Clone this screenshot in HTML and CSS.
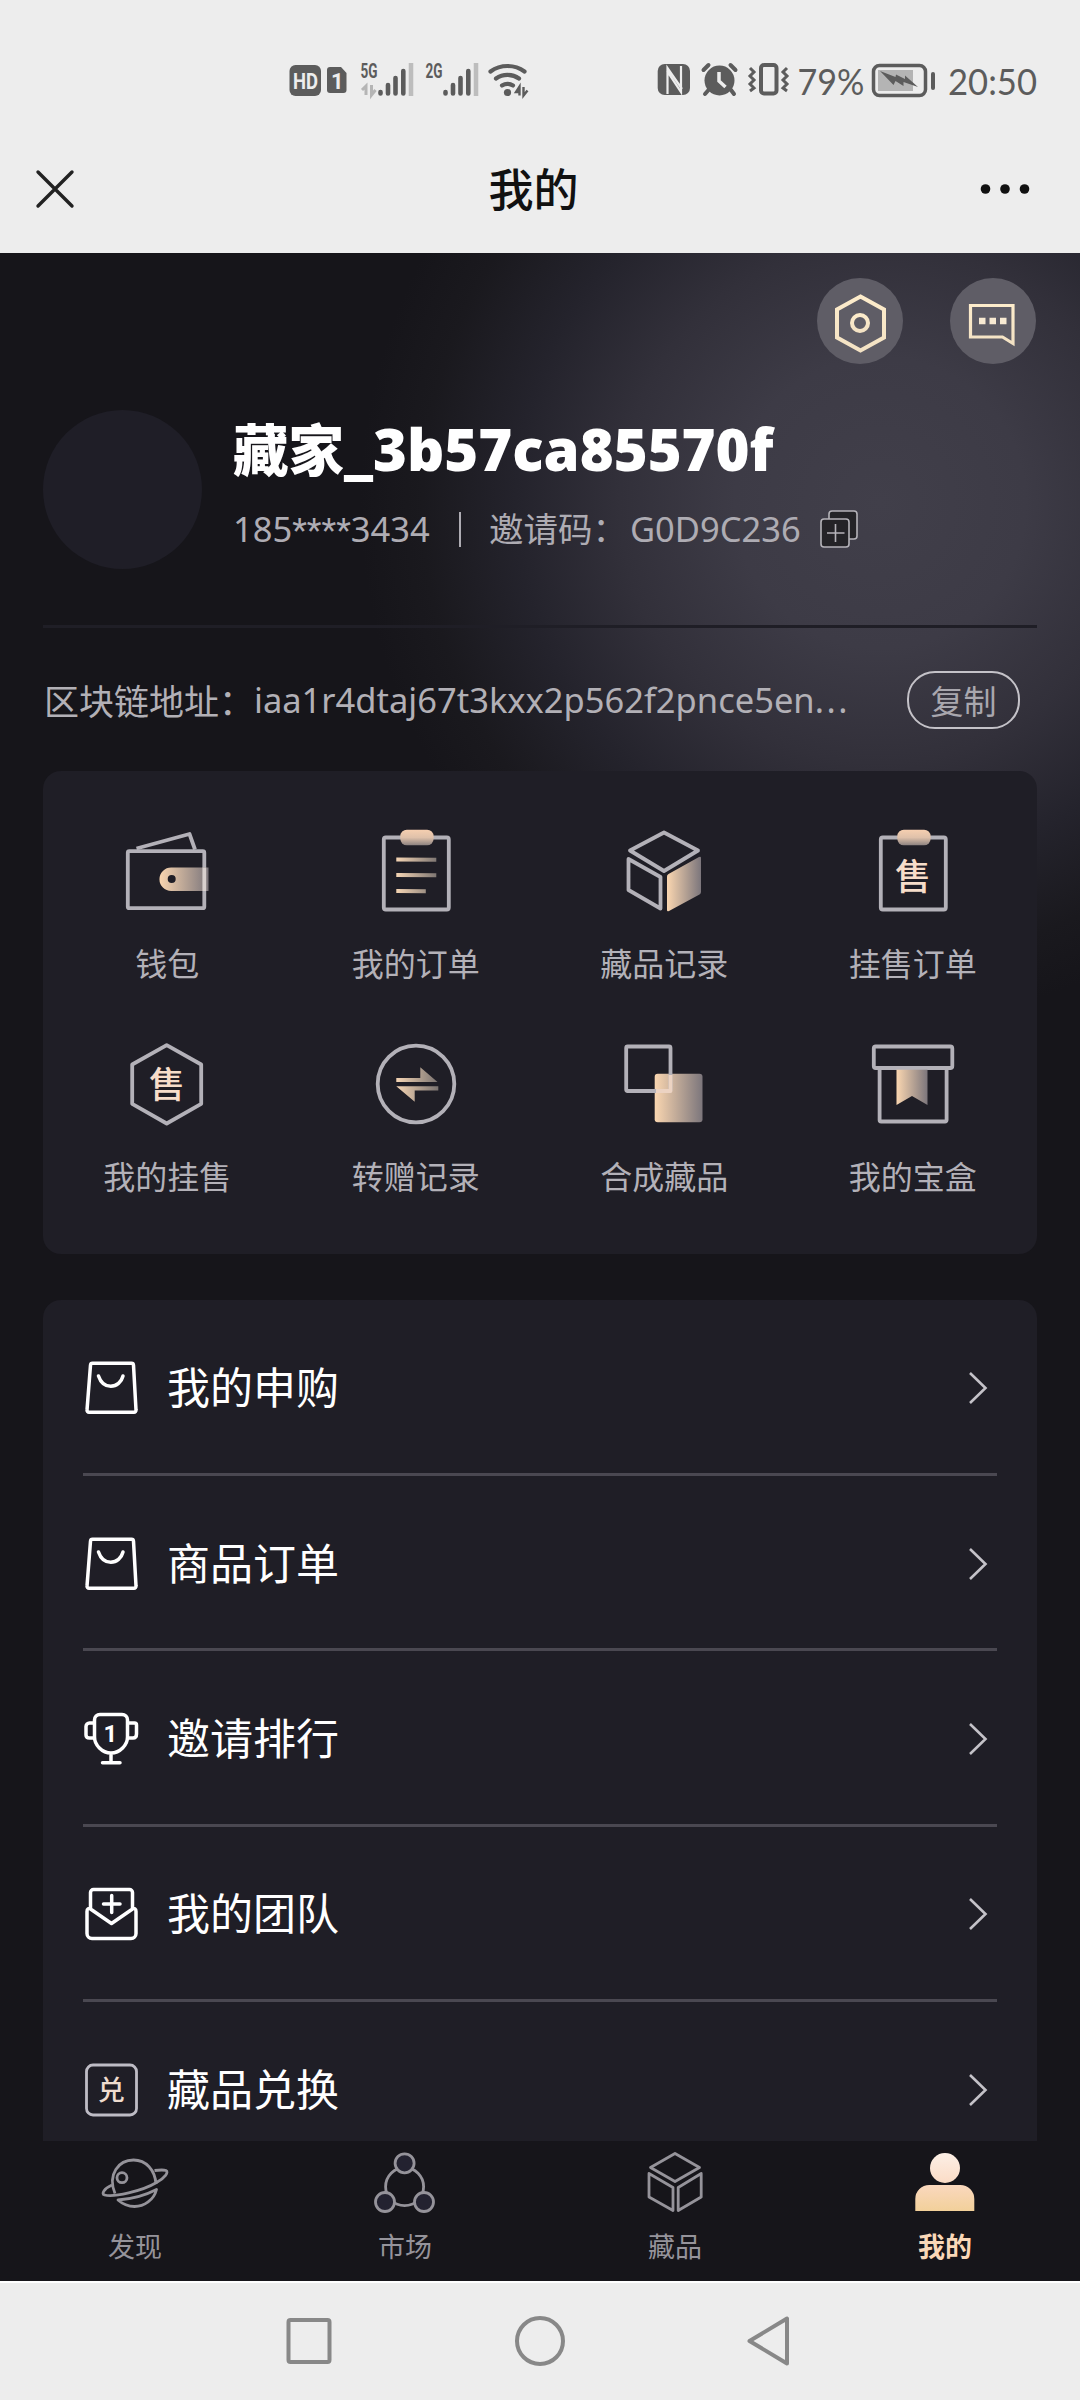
FILE: index.html
```html
<!DOCTYPE html>
<html lang="zh-CN">
<head>
<meta charset="utf-8">
<title>我的</title>
<link rel="stylesheet" href="styles.css">
</head>
<body>
<svg class="defs" width="0" height="0">
  <defs>
    <linearGradient id="goldH"><stop offset="0" stop-color="#fad6b0"/><stop offset="1" stop-color="#7c767c"/></linearGradient>
    <linearGradient id="goldLine" gradientUnits="userSpaceOnUse" x1="24" y1="0" x2="68" y2="0"><stop offset="0" stop-color="#f9d8b6"/><stop offset="1" stop-color="#77716f"/></linearGradient>
    <linearGradient id="goldV" x2="0" y2="1"><stop offset="0" stop-color="#f6cfb0"/><stop offset=".5" stop-color="#dfc1aa"/><stop offset="1" stop-color="#8c8280"/></linearGradient>
    <linearGradient id="head" x2="0" y2="1"><stop offset="0" stop-color="#fcefe6"/><stop offset="1" stop-color="#fbdcc6"/></linearGradient>
    <linearGradient id="torso" x2="0" y2="1"><stop offset="0" stop-color="#fad8be"/><stop offset="1" stop-color="#f2d09a"/></linearGradient>
    <linearGradient id="cream" x2="0" y2="1"><stop offset="0" stop-color="#fdeccb"/><stop offset="1" stop-color="#f3e2c4"/></linearGradient>
  </defs>
</svg>
<div class="phone">
  <header class="statusbar">
    <svg class="status-left" width="250" height="50" viewBox="280 50 250 50">
      <rect x="289.500" y="65" width="31.500" height="31" rx="6" fill="#5c5c5c"/>
      <text class="st-hd" x="293" y="89" textLength="25" lengthAdjust="spacingAndGlyphs">HD</text>
      <path d="M330 67h11l5.500 6v17a3 3 0 0 1-3 3h-13.500a3 3 0 0 1-3-3v-20a3 3 0 0 1 3-3z" fill="#5c5c5c"/>
      <text class="st-one" x="331" y="88.500">1</text>
      <text class="st-net" x="360.500" y="77.500" textLength="17" lengthAdjust="spacingAndGlyphs">5G</text>
      <text class="st-net" x="425.500" y="77.500" textLength="17" lengthAdjust="spacingAndGlyphs">2G</text>
      <g fill="none" stroke="#b5b5b5" stroke-width="3"><path d="M366 95V86l-4 4M371.500 85v10l4-5"/></g>
      <g stroke="#5c5c5c" stroke-width="4.600" stroke-linecap="round">
        <path d="M380.500 92v1.500M388 85v8.500M395.500 78v15.500M403.300 71v22.500M445.500 92v1.500M453 85v8.500M460.500 78v15.500M468.300 71v22.500"/>
      </g>
      <path d="M411 63v33M476 63v33" stroke="#bdbdbd" stroke-width="4.500"/>
      <g fill="none" stroke="#5c5c5c" stroke-width="4.200" stroke-linecap="round"><path d="M490.500 71.500a29 29 0 0 1 34 0M496 78.500a20 20 0 0 1 23 0M502 85.500a10.500 10.500 0 0 1 11 0"/></g>
      <circle cx="507.500" cy="92.500" r="3.600" fill="#5c5c5c"/>
      <path d="M519.500 95.500v-9l-3.500 5.500h4M523.500 87v8.500l4-5" fill="none" stroke="#5c5c5c" stroke-width="2.400"/>
    </svg>
    <svg class="status-right" width="390" height="60" viewBox="650 50 390 60">
      <rect x="657.700" y="64" width="32.300" height="31" rx="7" fill="#5c5c5c"/>
      <path d="M667.500 94V68l14.500 21M681 66v26L667 71" fill="none" stroke="#ededed" stroke-width="2.200"/>
      <circle cx="719.500" cy="80.500" r="15" fill="#5c5c5c"/>
      <path d="M703.500 70l5-5M730.500 65l5 5M708.500 90l-3.500 4M731 90l3 4" stroke="#5c5c5c" stroke-width="4" stroke-linecap="round"/>
      <path d="M719 72v9l6.500 6" fill="none" stroke="#ededed" stroke-width="3.500"/>
      <rect x="761" y="65" width="15.500" height="28.500" rx="3" fill="none" stroke="#5c5c5c" stroke-width="4"/>
      <path d="M750 68l4 4-4 4 4 4-4 4 4 4-4 3M787 68l-4 4 4 4-4 4 4 4-4 4 4 3" fill="none" stroke="#5c5c5c" stroke-width="3"/>
      <text class="st-text" x="797.500" y="94.500" textLength="67" lengthAdjust="spacingAndGlyphs">79%</text>
      <rect x="873.500" y="65.500" width="52" height="30" rx="6" fill="none" stroke="#5c5c5c" stroke-width="3.500"/>
      <rect x="878" y="70" width="35" height="21" fill="#b4b4b4"/>
      <path d="M880 71l15.500 6 .5-2.500 9 4.500v-3.500l13 11.500-14.500-5v4l-8-5-2 4z" fill="#5c5c5c"/>
      <path d="M933 74v14" stroke="#5c5c5c" stroke-width="4" stroke-linecap="round"/>
      <text class="st-text" x="948" y="94.500" textLength="89" lengthAdjust="spacingAndGlyphs">20:50</text>
    </svg>
  </header>
  <nav class="titlebar">
    <svg width="42" height="42" viewBox="0 0 42 42"><path d="M4 4l34 34M38 4L4 38" stroke="#222" stroke-width="3.400" stroke-linecap="round"/></svg>
    <h1>我的</h1>
    <svg width="50" height="12" viewBox="0 0 50 12" fill="#111"><circle cx="5.500" cy="6" r="4.800"/><circle cx="25" cy="6" r="4.800"/><circle cx="44.500" cy="6" r="4.800"/></svg>
  </nav>

  <main class="screen">
    <div class="tools">
      <div class="round"><svg width="86" height="86" viewBox="0 0 86 86" fill="none" stroke="url(#cream)" stroke-width="4"><path d="M43.500 18.500l23.500 13v28l-23.500 13-23.500-13v-28z"/><circle cx="43" cy="45" r="8"/></svg></div>
      <div class="round"><svg width="86" height="86" viewBox="0 0 86 86" fill="none" stroke="url(#cream)" stroke-width="3.200"><path d="M20.500 27.500H63v38l-10.500-6.500H20.500z"/><path d="M29 43h6.500M39.500 43H46M50 43h6.500" stroke="#f8ead2" stroke-width="6.500"/></svg></div>
    </div>
    <section class="profile">
      <div class="avatar"></div>
      <div class="who">
        <h2 class="name">藏家<span class="name-id">_3b57ca85570f</span></h2>
        <div class="meta">
          <span class="phone-no">185<span class="stars">****</span>3434</span><i class="bar"></i><span class="invite">邀请码：</span><span class="code">G0D9C236</span>
          <svg width="40" height="40" viewBox="0 0 40 40" fill="#242327" stroke="#b5b3b9" stroke-width="1.600"><rect x="10" y="2" width="28" height="28" rx="3"/><rect x="2" y="10" width="28" height="28" rx="3"/><path d="M8 24h17.500M16.500 15v18"/></svg>
        </div>
      </div>
    </section>
    <section class="chain">
      <span class="chain-label">区块链地址：</span><span class="addr">iaa1r4dtaj67t3kxx2p562f2pnce5en<span class="dots">...</span></span>
      <button class="copy">复制</button>
    </section>

    <section class="grid">
      <div class="cell"><svg viewBox="0 0 90 90"><path d="M14.500 22.500L67.500 8l5.500 15.500"/><rect x="5.800" y="25.200" width="76.500" height="57" rx="1.500"/><path d="M86.500 41.500H49.200a11.700 11.700 0 0 0 0 23.500h37.300zM49.700 49a4 4 0 1 1 0 8 4 4 0 0 1 0-8z" fill="url(#goldH)" stroke="none"/><path d="M82.300 41.500V65" stroke="#d8d0ce"/></svg><span>钱包</span></div>
      <div class="cell"><svg viewBox="0 0 90 90"><rect x="12.800" y="11.500" width="65" height="72" rx="2"/><rect x="29.300" y="3.700" width="33.300" height="15.600" rx="6.500" fill="url(#goldV)" stroke="none"/><g stroke="url(#goldLine)" stroke-width="4"><path d="M25.300 33.500l40 .2M25.300 49l40 .2M25.300 65l29.500.2"/></g></svg><span>我的订单</span></div>
      <div class="cell"><svg viewBox="0 0 90 90"><path d="M45 6.500l34 18-34 20.500-34-20.500zM9.500 33l32 18v31.500l-32-18.500z"/><path d="M48 51a3 3 0 0 1 1.500-3L80 31q2-1 2 1v34a3 3 0 0 1-1.500 2.500L50 85q-2 1-2-1z" fill="url(#goldH)" stroke="none"/></svg><span>藏品记录</span></div>
      <div class="cell"><svg viewBox="0 0 90 90"><rect x="12.800" y="11.500" width="65" height="72" rx="2"/><rect x="29.300" y="3.700" width="33.300" height="15.600" rx="6.500" fill="url(#goldV)" stroke="none"/><text class="glyph" x="45" y="64">售</text></svg><span>挂售订单</span></div>
      <div class="cell"><svg viewBox="0 0 90 90"><path d="M44.700 6.200l34.500 19.300v39.300L44.700 84.500 10.200 64.800V25.500z"/><text class="glyph" x="45" y="58.500">售</text></svg><span>我的挂售</span></div>
      <div class="cell"><svg viewBox="0 0 90 90"><circle cx="45" cy="45" r="38.300"/><path d="M25.300 39h24V28.300L66.500 43H25.300zM67.300 51.500H43.700V62.700L25.300 47.300h42z" fill="url(#goldLine)" stroke="none"/></svg><span>转赠记录</span></div>
      <div class="cell"><svg viewBox="0 0 90 90"><rect x="35.700" y="34.700" width="47.800" height="48.600" rx="3" fill="url(#goldH)" stroke="none"/><rect x="7.200" y="7.500" width="44.300" height="44.500" rx="1.500"/><path d="M51.500 36v16H37" stroke="#ecd3c2"/></svg><span>合成藏品</span></div>
      <div class="cell"><svg viewBox="0 0 90 90"><rect x="5.800" y="7.500" width="78.500" height="21.500" rx="2"/><path d="M11.600 29v52a1.500 1.500 0 0 0 1.500 1.500h64a1.500 1.500 0 0 0 1.500-1.500V29"/><path d="M28.500 30.800h31V66L44 57 28.500 66z" fill="url(#goldH)" stroke="none"/></svg><span>我的宝盒</span></div>
    </section>

    <section class="list">
      <div class="row"><svg class="ico" viewBox="0 0 56 56"><path d="M9.500 3.300h39a2 2 0 0 1 2 1.800L53 50a2 2 0 0 1-2 2.200H6A2 2 0 0 1 4 50L7.500 5.100a2 2 0 0 1 2-1.800z"/><path d="M15.500 16c2 6 6.500 10.300 12.300 10.300S38.500 22 40 16"/></svg><span>我的申购</span><svg class="chev" viewBox="0 0 20 34"><path d="M2 2l15.500 15L2 32"/></svg></div>
      <div class="row"><svg class="ico" viewBox="0 0 56 56"><path d="M9.500 3.300h39a2 2 0 0 1 2 1.800L53 50a2 2 0 0 1-2 2.200H6A2 2 0 0 1 4 50L7.500 5.100a2 2 0 0 1 2-1.800z"/><path d="M15.500 16c2 6 6.500 10.300 12.300 10.300S38.500 22 40 16"/></svg><span>商品订单</span><svg class="chev" viewBox="0 0 20 34"><path d="M2 2l15.500 15L2 32"/></svg></div>
      <div class="row"><svg class="ico" viewBox="0 0 56 56"><path d="M17 3.500h22a5.500 5.500 0 0 1 5.500 5.500v17c0 8-7.500 16-16.500 16S11.500 34 11.500 26V9A5.500 5.500 0 0 1 17 3.500zM11.500 12H6.500a3.500 3.500 0 0 0-3.500 3.500v8.500q0 3 3.500 3h5M44.500 12h7a2 2 0 0 1 2 2v9q0 4-3.500 4h-5.500M28 42v9.500M19.500 51.700h17.500"/><text class="rank" x="27.500" y="31">1</text></svg><span>邀请排行</span><svg class="chev" viewBox="0 0 20 34"><path d="M2 2l15.500 15L2 32"/></svg></div>
      <div class="row"><svg class="ico" viewBox="0 0 56 56"><path d="M7.500 23V6.500a3 3 0 0 1 3-3h36a3 3 0 0 1 3 3V23M7.500 23l21 14.500 21-14.500c2-1 3.500 0 3.500 2.500v22a5 5 0 0 1-5 5H9a5 5 0 0 1-5-5v-22c0-2.500 1.500-3.500 3.500-2.500zM20.500 18h16.500M28.700 9.500v17"/></svg><span>我的团队</span><svg class="chev" viewBox="0 0 20 34"><path d="M2 2l15.500 15L2 32"/></svg></div>
      <div class="row"><svg class="ico" viewBox="0 0 56 56"><rect x="3.500" y="3" width="50" height="50" rx="6.500" stroke="#bebcc5" stroke-width="2.800"/><text class="swap" x="28.300" y="38">兑</text></svg><span>藏品兑换</span><svg class="chev" viewBox="0 0 20 34"><path d="M2 2l15.500 15L2 32"/></svg></div>
    </section>
  </main>

  <nav class="tabs">
    <div class="tab"><svg viewBox="0 0 72 64"><path d="M16 43.500C8 24 20 10 34.500 10 47 10 56 20 57 34"/><path d="M13 35C5 38.500 2 44 5.500 45c9 2.500 38-4 52-12.500C66 28 70 22 67 20.500q-3-1-11.500 0"/><path d="M19 50c14-1 28-5 38.500-10.500C55 50 45 56.500 35.500 56.500q-9 0-16.500-6.500z"/><circle cx="23" cy="27.700" r="5"/></svg><span>发现</span></div>
    <div class="tab"><svg viewBox="0 0 72 64"><circle cx="35.600" cy="36.700" r="19"/><g fill="#232230"><circle cx="35.600" cy="13.300" r="9.500"/><circle cx="16" cy="52" r="9.500"/><circle cx="55" cy="52" r="9.500"/></g></svg><span>市场</span></div>
    <div class="tab"><svg viewBox="0 0 72 64"><path d="M36 3.500L60.500 17.500 36 31.500 11.500 17.500zM10 23.500l24 14v23l-24-13.500zM62.200 23.500l-23 14v23l23-13.500z"/></svg><span>藏品</span></div>
    <div class="tab active"><svg viewBox="0 0 72 64" stroke="none"><circle cx="36" cy="18" r="15" fill="url(#head)" stroke="none"/><path d="M6.300 61V49a14 14 0 0 1 14-14h31a14 14 0 0 1 14 14v12z" fill="url(#torso)" stroke="none"/></svg><span>我的</span></div>
  </nav>
  <footer class="sysnav">
    <svg viewBox="0 0 54 54"><rect x="6.500" y="6" width="41" height="42" rx="2"/></svg>
    <svg viewBox="0 0 54 54"><circle cx="27" cy="27" r="23"/></svg>
    <svg viewBox="0 0 54 54"><path d="M43 4.500v45L5.500 27z" stroke-linejoin="round"/></svg>
  </footer>
</div>
</body>
</html>
```
FILE: styles.css
```css
* { box-sizing: border-box; margin: 0; padding: 0; }
body { background: #ededed; font-family: "Noto Sans", "Noto Sans CJK SC", sans-serif; }
.defs { display: block; position: absolute; }
.phone { width: 1080px; height: 2400px; display: flex; flex-direction: column; overflow: hidden; }

.statusbar { height: 125px; padding: 50px 40px 0 280px; display: flex; justify-content: space-between; align-items: flex-start; flex: none; }
.st-hd, .st-one, .st-net { font-family: Roboto, sans-serif; font-weight: 700; }
.st-hd { font-size: 22px; fill: #ededed; }
.st-one { font-size: 22px; fill: #ededed; }
.st-net { font-size: 20px; fill: #5c5c5c; }
.st-text { font-family: Lato, sans-serif; font-size: 36px; fill: #5c5c5c; }

.titlebar { height: 128px; padding: 0 50px 0 34px; display: flex; align-items: center; flex: none; }
.titlebar h1 { flex: 1; margin: 0 0 2px 11px; text-align: center; font: 500 45px/64px "Noto Sans CJK SC", sans-serif; color: #111; }

.screen {
  height: 1888px; flex: none; overflow: hidden; padding: 25px 43px 0;
  background: radial-gradient(circle 520px at 880px 250px, #413f4a 0, #3d3b46 28%, #32303a 50%, #24232c 70%, #1a191e 88%, #16151a 100%) #16151a;
}
.tools { display: flex; justify-content: flex-end; gap: 47px; padding-right: 1px; }
.round { width: 86px; height: 86px; border-radius: 50%; background: #5f5d66; }
.round svg { display: block; }
.profile { display: flex; gap: 31px; height: 264px; padding-top: 46px; border-bottom: 3px solid #1f1e26; }
.avatar { width: 159px; height: 159px; border-radius: 50%; background: #1f1e27; flex: none; }
.who { display: flex; flex-direction: column; margin-top: -3px; }
.name { height: 80px; font: 900 55.500px/80px "Noto Sans CJK SC", sans-serif; color: #fff; white-space: nowrap; }
.name-id { font-family: "Open Sans", sans-serif; font-weight: 800; font-size: 58px; }
.meta { display: flex; align-items: center; height: 44px; margin-top: 20px; color: #aeacb3; font-size: 34.500px; line-height: 44px; white-space: nowrap; }
.phone-no { width: 198px; }
.stars { font-family: Roboto, sans-serif; font-size: 34px; }
.bar { width: 2px; height: 35px; background: #aeacb3; margin: 0 28px; }
.invite { width: 141px; }
.code { width: 168px; }
.meta svg { margin-left: 21px; flex: none; }
.chain { display: flex; align-items: center; height: 143px; padding: 0 17px 0 1px; color: #b2b0b6; font-size: 35px; white-space: nowrap; }
.chain-label { width: 210px; }
.addr { flex: 1; font-size: 34.500px; }
.dots { letter-spacing: 2.500px; }
.copy { width: 113px; height: 58px; border: 2px solid #c4c2c8; border-radius: 28px; background: none; color: #a9a7ae; font: 400 33px/50px "Noto Sans CJK SC", sans-serif; }

.grid { display: grid; grid-template-columns: repeat(4, 1fr); grid-auto-rows: 213px; height: 483px; padding: 55px 0 0; border-radius: 18px; background: #1f1e26; }
.cell { display: flex; flex-direction: column; align-items: center; }
.cell svg { width: 90px; height: 90px; fill: none; stroke: #b3b1b8; stroke-width: 3.800; stroke-linejoin: round; }
.cell span { margin-top: 22px; font: 400 32px/48px "Noto Sans CJK SC", sans-serif; color: #b3b1b8; }
.cell .glyph { font: 500 36px "Noto Sans CJK SC", sans-serif; fill: #f6ddca; stroke: none; text-anchor: middle; }

.list { margin-top: 46px; border-radius: 18px 18px 0 0; background: #1f1e26; padding: 0 40px; height: 900px; }
.row { display: flex; align-items: center; height: 175.400px; padding-top: 3px; border-bottom: 3px solid #4a4851; }
.row:first-child { height: 176px; }
.ico { width: 56px; height: 56px; fill: none; stroke: #fff; stroke-width: 3.500; stroke-linejoin: round; stroke-linecap: round; }
.row span { flex: 1; margin: 0 0 6px 28px; font: 400 43px/60px "Noto Sans CJK SC", sans-serif; color: #fff; }
.chev { width: 20px; height: 34px; margin-right: 9px; fill: none; stroke: #c4c2c8; stroke-width: 2.600; }
.rank { font: 700 24px Roboto, sans-serif; fill: #fff; stroke: none; text-anchor: middle; }
.swap { font: 500 27px "Noto Sans CJK SC", sans-serif; fill: #eedccf; stroke: none; text-anchor: middle; }

.tabs { height: 140px; padding-top: 9px; display: grid; grid-template-columns: repeat(4, 1fr); background: #16151a; flex: none; }
.tab { display: flex; flex-direction: column; align-items: center; }
.tab svg { width: 72px; height: 64px; fill: none; stroke: #95939a; stroke-width: 2.800; stroke-linejoin: round; }
.tab span { margin-top: 12px; font: 400 27px/40px "Noto Sans CJK SC", sans-serif; color: #95939a; }
.tab.active span { font-weight: 700; color: #fad8b8; }

.sysnav { flex: 1; border-top: 2px solid #fff; display: flex; gap: 177px; padding: 31px 0 0 282px; background: #ededed; }
.sysnav svg { width: 54px; height: 54px; fill: none; stroke: #888; stroke-width: 4; }
```
